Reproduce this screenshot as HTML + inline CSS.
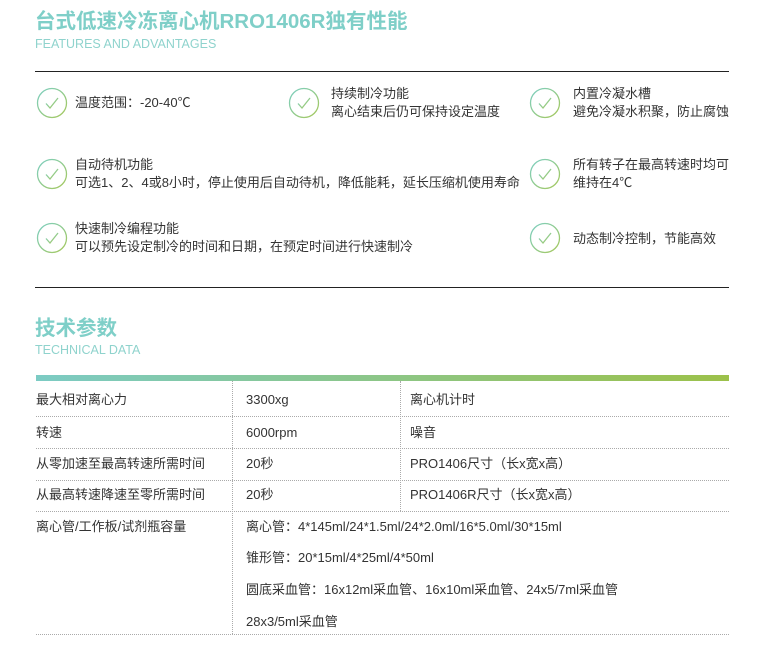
<!DOCTYPE html><html><head><meta charset="utf-8"><style>
body{margin:0;width:780px;height:645px;background:#fff;position:relative;overflow:hidden;font-family:"Liberation Sans","Noto Sans CJK SC",sans-serif;color:#333}
.a{position:absolute;white-space:nowrap;line-height:18px}
.t{font-size:20.5px;line-height:24px;font-weight:bold;color:#7fcfc8}
.s{font-size:12.5px;line-height:14px;color:#8fd3cd;letter-spacing:0}
.f{font-size:13px;line-height:18px;color:#333}
.ck{position:absolute;width:32px;height:32px}
.tb{font-size:13px;color:#333}
.hl{position:absolute;left:36px;width:693px;border-top:1px dotted #aaa}
.vl{position:absolute;border-left:1px dotted #aaa}
</style></head><body>
<svg width="0" height="0" style="position:absolute"><defs><linearGradient id="g" x1="0" y1="0" x2="1" y2="1"><stop offset="0" stop-color="#7ccfc4"/><stop offset="1" stop-color="#a6c85a"/></linearGradient>
<symbol id="c" viewBox="0 0 32 32"><circle cx="16" cy="16" r="14.5" fill="none" stroke="url(#g)" stroke-width="1.3"/><path d="M10 16.5l4 4.5 8-10" fill="none" stroke="url(#g)" stroke-width="1.3"/></symbol></defs></svg>
<div class="a t" style="left:35px;top:10px">台式低速冷冻离心机RRO1406R独有性能</div>
<div class="a s" style="left:35px;top:37px">FEATURES AND ADVANTAGES</div>
<div style="position:absolute;left:35px;top:71px;width:694px;border-top:1.5px solid #222"></div>

<svg class="ck" style="left:36px;top:87px"><use href="#c"/></svg>
<div class="a f" style="left:75px;top:94px">温度范围：-20-40℃</div>
<svg class="ck" style="left:288px;top:87px"><use href="#c"/></svg>
<div class="a f" style="left:331px;top:85px">持续制冷功能<br>离心结束后仍可保持设定温度</div>
<svg class="ck" style="left:529px;top:87px"><use href="#c"/></svg>
<div class="a f" style="left:573px;top:85px">内置冷凝水槽<br>避免冷凝水积聚，防止腐蚀</div>

<svg class="ck" style="left:36px;top:158px"><use href="#c"/></svg>
<div class="a f" style="left:75px;top:156px">自动待机功能<br>可选1、2、4或8小时，停止使用后自动待机，降低能耗，延长压缩机使用寿命</div>
<svg class="ck" style="left:529px;top:158px"><use href="#c"/></svg>
<div class="a f" style="left:573px;top:156px">所有转子在最高转速时均可<br>维持在4℃</div>

<svg class="ck" style="left:36px;top:222px"><use href="#c"/></svg>
<div class="a f" style="left:75px;top:220px">快速制冷编程功能<br>可以预先设定制冷的时间和日期，在预定时间进行快速制冷</div>
<svg class="ck" style="left:529px;top:222px"><use href="#c"/></svg>
<div class="a f" style="left:573px;top:230px">动态制冷控制，节能高效</div>

<div style="position:absolute;left:35px;top:287px;width:694px;border-top:1.5px solid #222"></div>
<div class="a t" style="left:35px;top:317px">技术参数</div>
<div class="a s" style="left:35px;top:343px">TECHNICAL DATA</div>
<div style="position:absolute;left:36px;top:375px;width:693px;height:6px;background:linear-gradient(90deg,#7ccbc4,#9cc14a)"></div>

<div class="vl" style="left:232px;top:381px;height:253px"></div>
<div class="vl" style="left:400px;top:381px;height:130px"></div>
<div class="hl" style="top:416px"></div>
<div class="hl" style="top:448px"></div>
<div class="hl" style="top:480px"></div>
<div class="hl" style="top:511px"></div>
<div class="hl" style="top:634px"></div>

<div class="a tb" style="left:36px;top:391px">最大相对离心力</div>
<div class="a tb" style="left:246px;top:391px">3300xg</div>
<div class="a tb" style="left:410px;top:391px">离心机计时</div>
<div class="a tb" style="left:36px;top:424px">转速</div>
<div class="a tb" style="left:246px;top:424px">6000rpm</div>
<div class="a tb" style="left:410px;top:424px">噪音</div>
<div class="a tb" style="left:36px;top:455px">从零加速至最高转速所需时间</div>
<div class="a tb" style="left:246px;top:455px">20秒</div>
<div class="a tb" style="left:410px;top:455px">PRO1406尺寸（长x宽x高）</div>
<div class="a tb" style="left:36px;top:486px">从最高转速降速至零所需时间</div>
<div class="a tb" style="left:246px;top:486px">20秒</div>
<div class="a tb" style="left:410px;top:486px">PRO1406R尺寸（长x宽x高）</div>
<div class="a tb" style="left:36px;top:518px">离心管/工作板/试剂瓶容量</div>
<div class="a tb" style="left:246px;top:518px">离心管：4*145ml/24*1.5ml/24*2.0ml/16*5.0ml/30*15ml</div>
<div class="a tb" style="left:246px;top:549px">锥形管：20*15ml/4*25ml/4*50ml</div>
<div class="a tb" style="left:246px;top:581px">圆底采血管：16x12ml采血管、16x10ml采血管、24x5/7ml采血管</div>
<div class="a tb" style="left:246px;top:613px">28x3/5ml采血管</div>
</body></html>
